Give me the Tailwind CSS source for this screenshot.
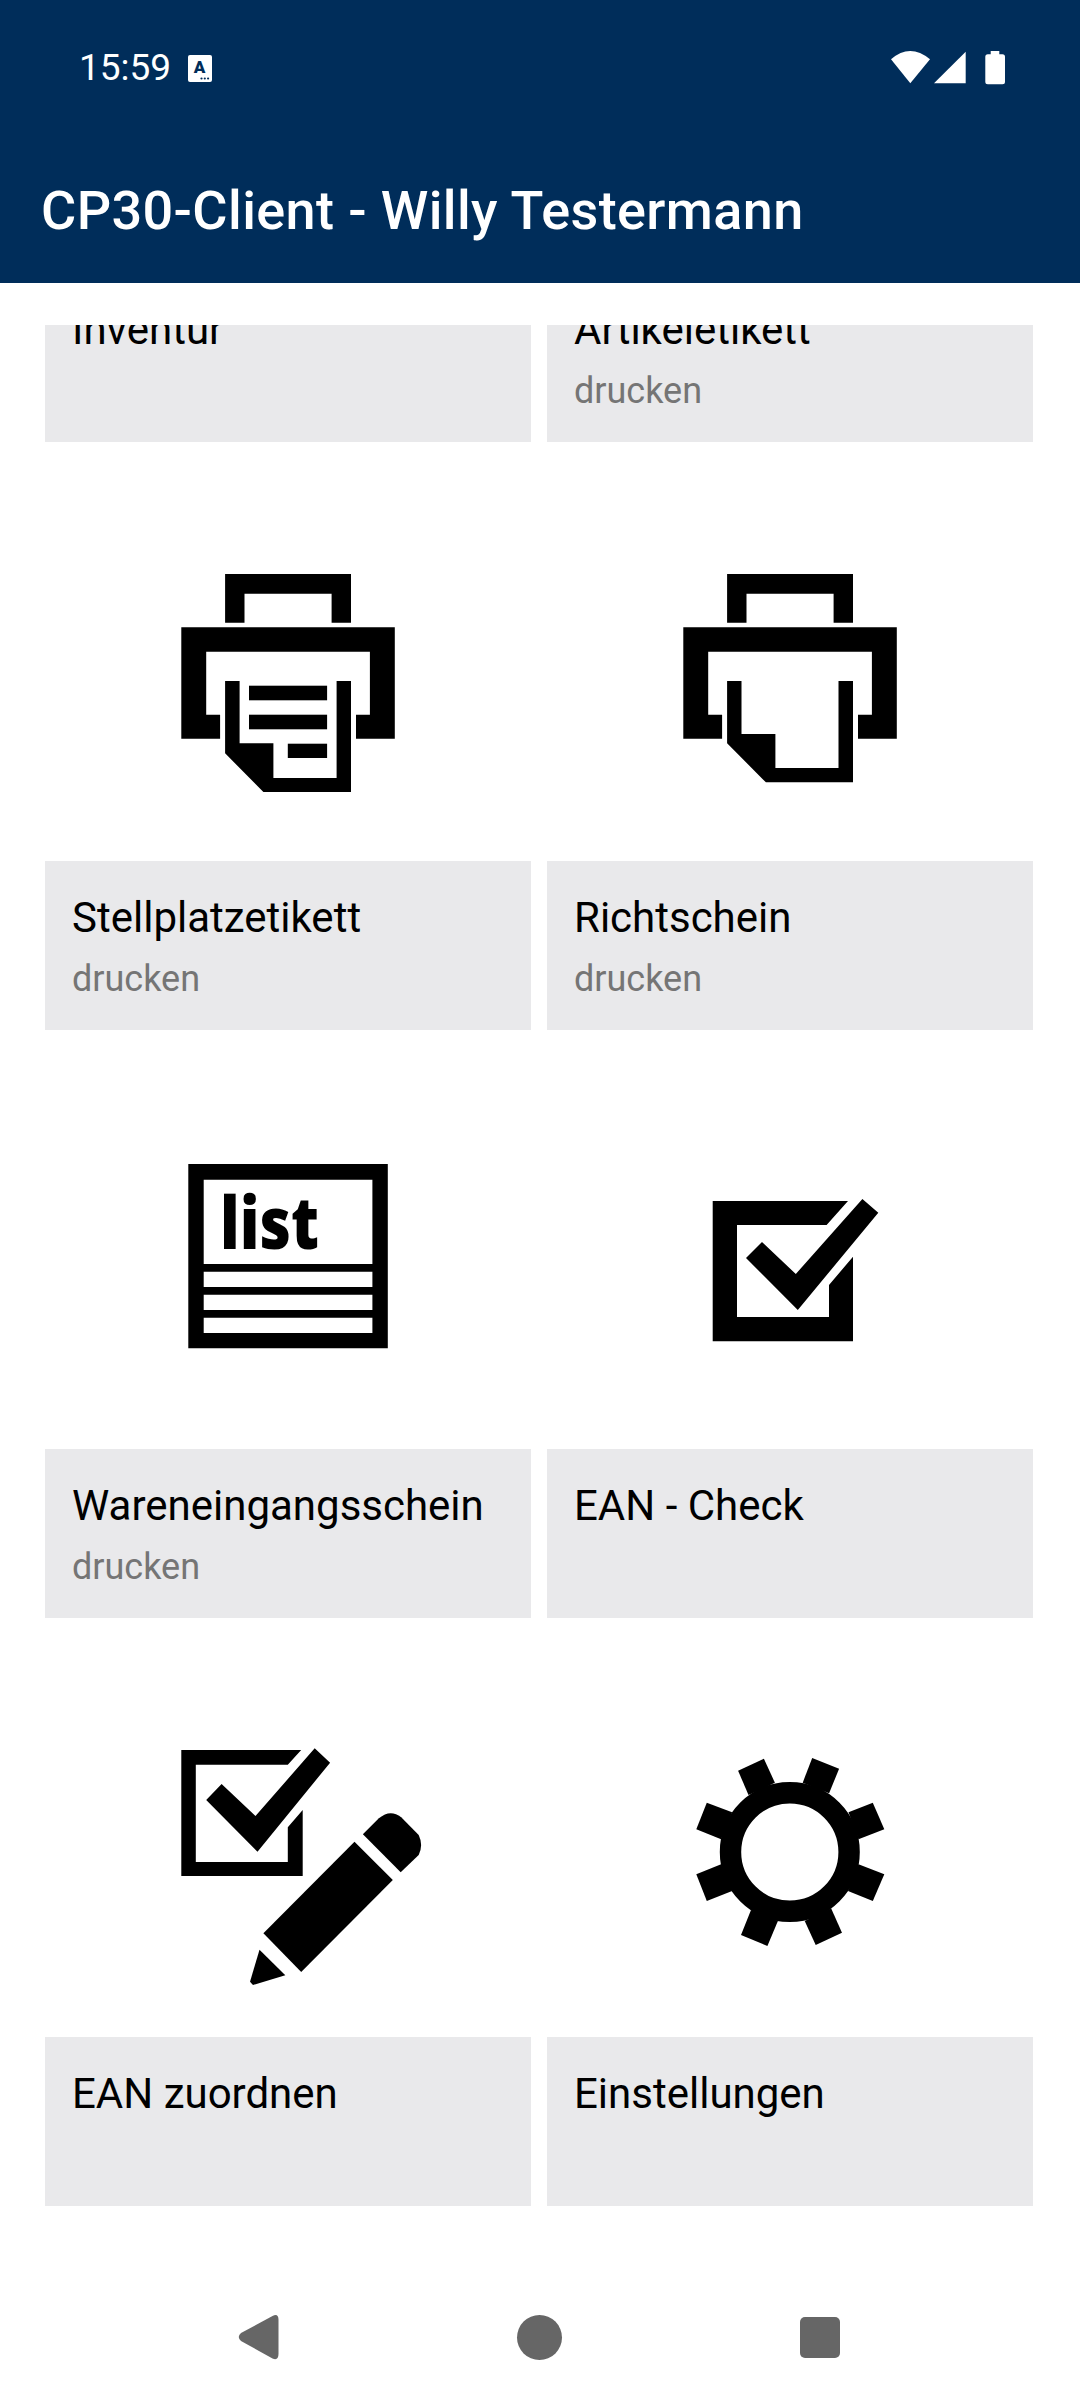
<!DOCTYPE html>
<html lang="de">
  <head>
    <meta charset="UTF-8" />
    <meta name="viewport" content="width=device-width, initial-scale=1.0" />
    <script src="https://cdn.jsdelivr.net/npm/@tailwindcss/browser@4"></script>
    <title>CP30-Client</title>
  </head>
  <body class="bg-white">
    <div class="w-[1080px] h-[2400px] flex flex-col overflow-hidden font-['Roboto',sans-serif]">
      <!-- status bar + toolbar -->
      <header class="h-[283px] shrink-0 bg-[#002d5a] text-white">
        <div class="h-[136px] flex justify-between items-center pl-[79px] pr-[74px]">
          <div class="flex items-center gap-[17px]">
            <span class="text-[37px] leading-[44px]">15:59</span>
            <svg class="w-[24px] h-[27px]" viewBox="0 0 24 27">
              <rect width="24" height="27" rx="2" fill="#fff" />
              <text x="11.5" y="18" text-anchor="middle" font-family="Roboto" font-weight="900" font-size="17" fill="#002d5a">A</text>
              <circle cx="13.5" cy="23.5" r="1.1" fill="#002d5a" />
              <circle cx="16.8" cy="23.5" r="1.1" fill="#002d5a" />
              <circle cx="20.1" cy="23.5" r="1.1" fill="#002d5a" />
            </svg>
          </div>
          <svg class="w-[116px] h-[36px]" viewBox="890 50 116 36" fill="#fff">
            <path d="M891 59.3Q910 42.7 930 59.3L910.3 83.3Z" />
            <path d="M965.7 51.7V83.3H934Z" />
            <path d="M990.7 51H999.3V54.3H1002.5Q1005 54.3 1005 56.8V81.8Q1005 84.3 1002.5 84.3H987.8Q985.3 84.3 985.3 81.8V56.8Q985.3 54.3 987.8 54.3H990.7Z" />
          </svg>
        </div>
        <h1 class="mt-[40px] pl-[41px] text-[54px] leading-[70px] tracking-[0.38px] font-medium whitespace-nowrap">CP30-Client - Willy Testermann</h1>
      </header>

      <!-- scrolled menu, first row is cut off at the top -->
      <main class="mt-[42px] h-[1955px] overflow-hidden">
        <div class="-mt-[52px] ml-[45px] grid grid-cols-[486px_486px] gap-x-[16px]">
          <div class="h-[169px] bg-[#e9e9eb] pl-[27px] pt-[32px]">
            <p class="text-[42px] leading-[50px] text-black">Inventur</p>
          </div>
          <div class="h-[169px] bg-[#e9e9eb] pl-[27px] pt-[32px]">
            <p class="text-[42px] leading-[50px] text-black">Artikeletikett</p>
            <p class="mt-[14px] text-[36px] leading-[44px] text-[#757575]">drucken</p>
          </div>

          <div>
            <svg class="block w-[486px] h-[419px]" viewBox="45 442 486 419">
              <path d="M225.1 622.7V574H351V622.7H331.6V593.7H244.5V622.7Z" />
              <path d="M181.3 738.7V627.3H394.8V738.7H356V714.7H369.9V651.7H206.2V714.7H220.1V738.7Z" />
              <path d="M225.1 681H239.6V743.3H273.4V778H336.6V681H351V792H263.4L225.1 753.3Z" />
              <rect x="249" y="685.7" width="78.1" height="14.6" />
              <rect x="249" y="714.7" width="78.1" height="14.6" />
              <rect x="287.8" y="743.7" width="39.3" height="14.3" />
            </svg>
            <div class="h-[169px] bg-[#e9e9eb] pl-[27px] pt-[32px]">
              <p class="text-[42px] leading-[50px] text-black">Stellplatzetikett</p>
              <p class="mt-[14px] text-[36px] leading-[44px] text-[#757575]">drucken</p>
            </div>
          </div>
          <div>
            <svg class="block w-[486px] h-[419px]" viewBox="547 442 486 419">
              <path d="M727.1 622.7V574H853V622.7H833.6V593.7H746.5V622.7Z" />
              <path d="M683.3 738.7V627.3H896.8V738.7H858V714.7H871.9V651.7H708.2V714.7H722.1V738.7Z" />
              <path d="M727.1 681H741.5V734H775.4V768H838.5V681H853V782.3H765.9L727.1 743.3Z" />
            </svg>
            <div class="h-[169px] bg-[#e9e9eb] pl-[27px] pt-[32px]">
              <p class="text-[42px] leading-[50px] text-black">Richtschein</p>
              <p class="mt-[14px] text-[36px] leading-[44px] text-[#757575]">drucken</p>
            </div>
          </div>

          <div>
            <svg class="block w-[486px] h-[419px]" viewBox="45 1030 486 419">
              <path fill-rule="evenodd" d="M188.3 1164H387.8V1348.3H188.3ZM203.7 1179.7V1264H372.4V1179.7ZM203.7 1271.7V1287H372.4V1271.7ZM203.7 1294.7V1310H372.4V1294.7ZM203.7 1317.7V1333H372.4V1317.7Z" />
              <text x="220" y="1249" font-family="Open Sans" font-weight="800" font-size="72" textLength="99" lengthAdjust="spacingAndGlyphs">list</text>
            </svg>
            <div class="h-[169px] bg-[#e9e9eb] pl-[27px] pt-[32px]">
              <p class="text-[42px] leading-[50px] text-black">Wareneingangsschein</p>
              <p class="mt-[14px] text-[36px] leading-[44px] text-[#757575]">drucken</p>
            </div>
          </div>
          <div>
            <svg class="block w-[486px] h-[419px]" viewBox="547 1030 486 419">
              <path d="M712.7 1201H848L826.6 1225H737V1317H829V1285L853 1256.7V1341.3H712.7Z" />
              <path d="M862.4 1199L878.3 1212.7L797.8 1310L746 1258L762 1242L795.8 1274Z" />
            </svg>
            <div class="h-[169px] bg-[#e9e9eb] pl-[27px] pt-[32px]">
              <p class="text-[42px] leading-[50px] text-black">EAN - Check</p>
            </div>
          </div>

          <div>
            <svg class="block w-[486px] h-[419px]" viewBox="45 1618 486 419">
              <path d="M181.3 1750H301.2L287.8 1764.7H195.8V1862H287.8V1827.3L302.7 1810V1876H181.3Z" />
              <path d="M314.7 1748.3L330.1 1762.7L257.5 1851.7L206.2 1800L221.6 1784L255.5 1816Z" />
              <path d="M354.5 1841.7L392.8 1880L301.2 1972L263.4 1933.3Z" />
              <path d="M362.9 1834.3L378.9 1818.3Q390.3 1808.6 401.2 1817.3L418.7 1835Q423.5 1845 418.7 1855L400.7 1872.3Z" />
              <path d="M259.5 1949.7L285.3 1975.3L253 1985L250 1981.7Z" />
            </svg>
            <div class="h-[169px] bg-[#e9e9eb] pl-[27px] pt-[32px]">
              <p class="text-[42px] leading-[50px] text-black">EAN zuordnen</p>
            </div>
          </div>
          <div>
            <svg class="block w-[486px] h-[419px]" viewBox="547 1618 486 419">
              <g transform="translate(789.8 1852)">
                <circle r="59.3" fill="none" stroke="#000" stroke-width="21.4" />
                <path d="M-51.7 -81.3L-25.9 -93.3L-14.9 -69.3L-41.3 -57Z" />
                <path d="M22.4 -94L49.3 -83.3L39.3 -58.7L12.9 -69.3Z" />
                <path d="M83 -49.3L94.5 -22.7L68.7 -12.7L58.7 -39.7Z" />
                <path d="M94.5 22.3L83 49L58.2 39L68.7 12.3Z" />
                <path d="M52.2 80.7L25.9 93L14.9 69L41.3 56.3Z" />
                <path d="M-22.4 94L-48.8 83L-38.8 58L-11.9 69Z" />
                <path d="M-83 49L-93.5 22.3L-68.7 12.3L-57.7 39Z" />
                <path d="M-93.5 -22.7L-83 -49.3L-57.7 -39.7L-68.7 -12.7Z" />
              </g>
            </svg>
            <div class="h-[169px] bg-[#e9e9eb] pl-[27px] pt-[32px]">
              <p class="text-[42px] leading-[50px] text-black">Einstellungen</p>
            </div>
          </div>
        </div>
      </main>

      <!-- navigation bar -->
      <nav class="h-[120px] shrink-0 flex items-center pl-[238px] pb-[6px]">
        <svg class="w-[41px] h-[46px]" viewBox="238 2314 41 46" fill="#666">
          <path d="M272.5 2316L241 2333Q236.5 2337 241 2341L272.5 2358.5Q278.5 2361 278.5 2354V2320Q278.5 2313 272.5 2316Z" />
        </svg>
        <div class="ml-[238px] w-[45px] h-[45px] rounded-full bg-[#666]"></div>
        <div class="ml-[238px] w-[40px] h-[41px] rounded-[5px] bg-[#666]"></div>
      </nav>
    </div>
  </body>
</html>
